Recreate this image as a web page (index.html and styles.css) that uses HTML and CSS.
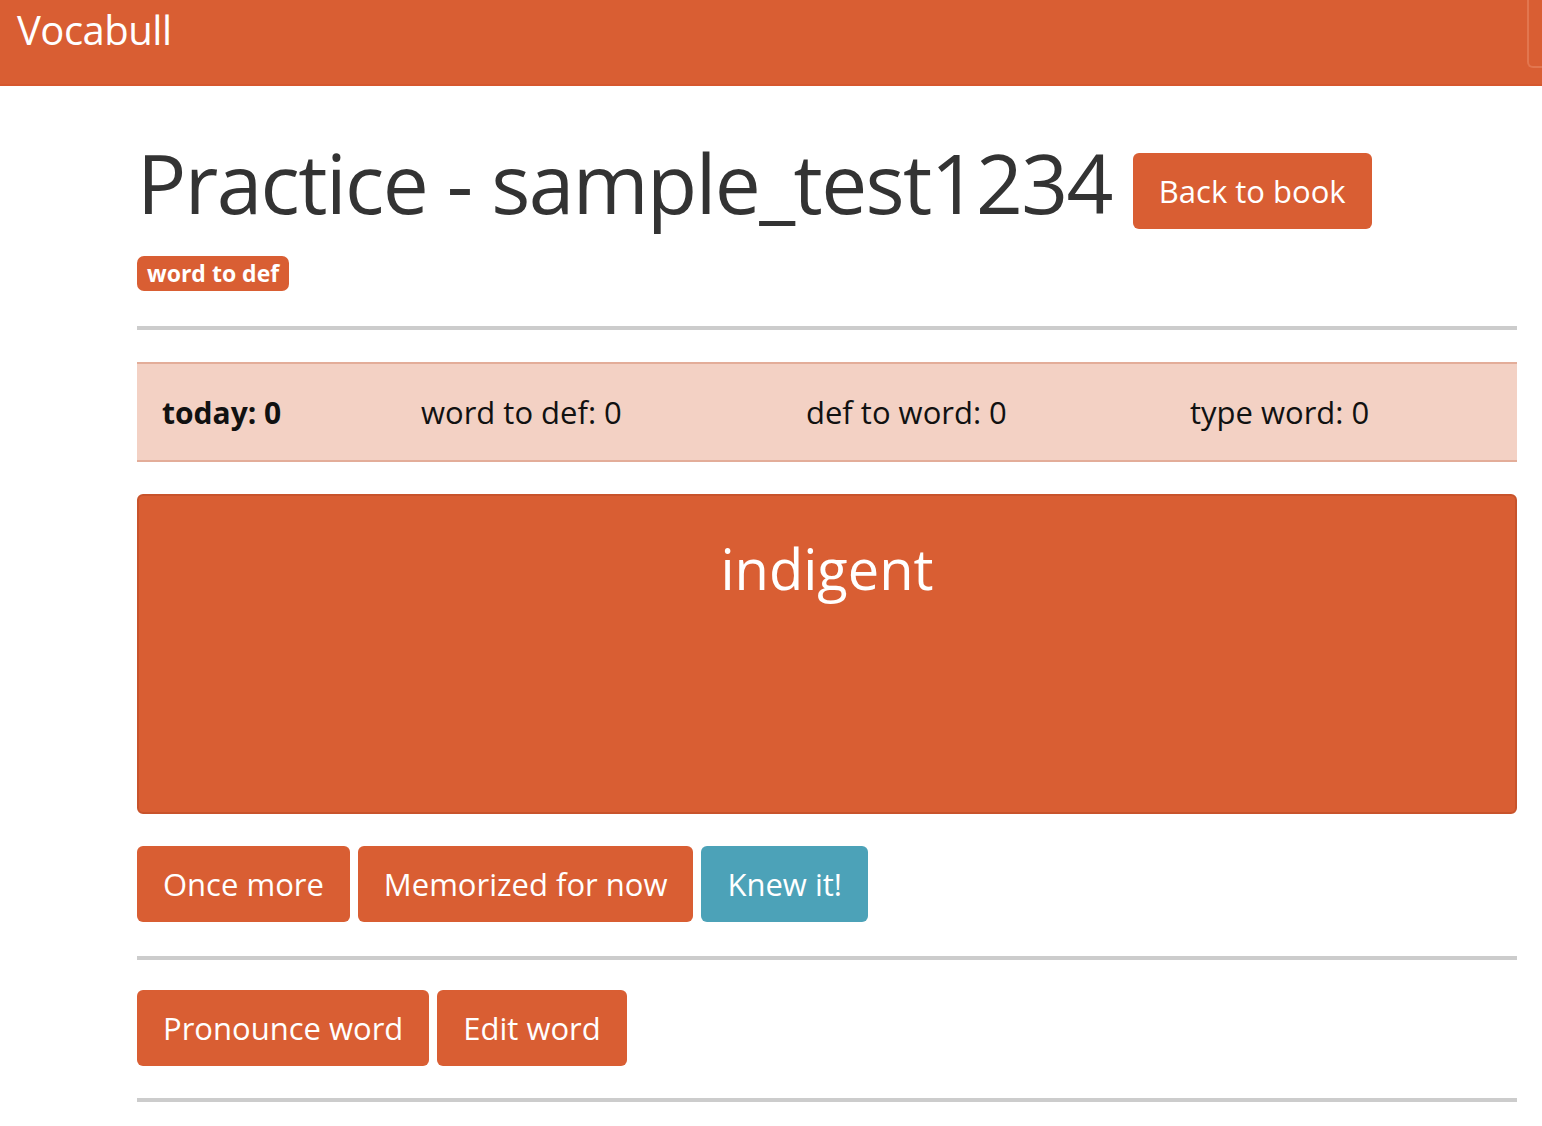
FILE: index.html
```html
<!DOCTYPE html>
<html>
<head>
<meta charset="utf-8">
<link rel="stylesheet" href="styles.css">
</head>
<body>
<nav class="navbar">
  <a class="brand">Vocabull</a>
  <span class="toggle-edge"></span>
</nav>
<main class="container">
  <div class="title-row">
    <h1 class="title">Practice - sample_test1234</h1>
    <button class="btn btn-primary btn-back">Back to book</button>
  </div>
  <div class="badge-row"><span class="badge">word to def</span></div>
  <hr class="rule rule-first">
  <div class="stats">
    <div class="stat stat-bold">today: 0</div>
    <div class="stat">word to def: 0</div>
    <div class="stat">def to word: 0</div>
    <div class="stat">type word: 0</div>
  </div>
  <div class="card">
    <div class="word">indigent</div>
  </div>
  <div class="btn-row">
    <button class="btn btn-primary">Once more</button>
    <button class="btn btn-primary">Memorized for now</button>
    <button class="btn btn-info">Knew it!</button>
  </div>
  <hr class="rule rule-mid">
  <div class="btn-row btn-row-2">
    <button class="btn btn-primary">Pronounce word</button>
    <button class="btn btn-primary">Edit word</button>
  </div>
  <hr class="rule rule-last">
</main>
</body>
</html>
```

FILE: styles.css
```css
* { box-sizing: border-box; }
html, body { margin: 0; padding: 0; background: #fff; }
body {
  font-family: "Open Sans", "Noto Sans", "Liberation Sans", sans-serif;
  color: #333;
}
.navbar {
  position: relative;
  height: 86px;
  background: #d95e33;
  border-bottom: 2px solid #d6582e;
}
.brand {
  display: inline-block;
  padding: 4px 0 0 17px;
  font-size: 40px;
  line-height: 52px;
  color: #fff;
  letter-spacing: -0.5px;
}
.toggle-edge {
  position: absolute;
  right: 0;
  top: 0;
  width: 15px;
  height: 68px;
  border-left: 2px solid #e2764f;
  border-bottom: 2px solid #e2764f;
  border-bottom-left-radius: 6px;
}
.container {
  margin-left: 137px;
  width: 1380px;
}
.title-row {
  display: flex;
  align-items: flex-start;
  gap: 21px;
  margin-top: 66px;
}
.title {
  margin: 0;
  font-weight: 400;
  font-size: 82px;
  line-height: 100px;
  color: #333;
  letter-spacing: -1.6px;
  position: relative;
  top: -20px;
  height: 94px;
}
.btn {
  font-family: inherit;
  border: none;
  color: #fff;
  border-radius: 6px;
  height: 76px;
  padding: 0 26px;
  font-size: 31px;
  cursor: pointer;
}
.btn-primary { background: #d95e33; }
.btn-info { background: #4ca2b8; }
.btn-back { margin-top: 1px; padding: 0 26px; }
.badge-row { margin-top: 10px; height: 35px; }
.badge {
  display: inline-block;
  background: #d95e33;
  color: #fff;
  font-weight: 700;
  font-size: 23px;
  line-height: 34px;
  height: 35px;
  padding: 0 10px;
  border-radius: 7px;
}
.rule {
  border: none;
  border-top: 4px solid #cccccc;
  margin: 34px 0 32px;
}
.rule-first { margin-top: 35px; }
.rule-mid { margin-bottom: 0; }
.rule-last { margin-top: 32px; }
.stats {
  display: grid;
  grid-template-columns: 259px 385px 384px 1fr;
  align-items: center;
  height: 100px;
  padding-left: 25px;
  background: #f3d1c4;
  border-top: 2px solid #e3ad99;
  border-bottom: 2px solid #e3ad99;
  font-size: 31px;
  color: #111;
}
.stat-bold { font-weight: 700; font-size: 30px; }
.card {
  margin-top: 32px;
  height: 320px;
  background: #d95e33;
  border: 2px solid #c8532b;
  border-radius: 6px;
  text-align: center;
}
.word {
  padding-top: 32px;
  font-size: 56px;
  line-height: 80px;
  color: #fff;
}
.btn-row {
  display: flex;
  gap: 8px;
  margin-top: 32px;
}
.btn-row-2 { margin-top: 30px; }
```
